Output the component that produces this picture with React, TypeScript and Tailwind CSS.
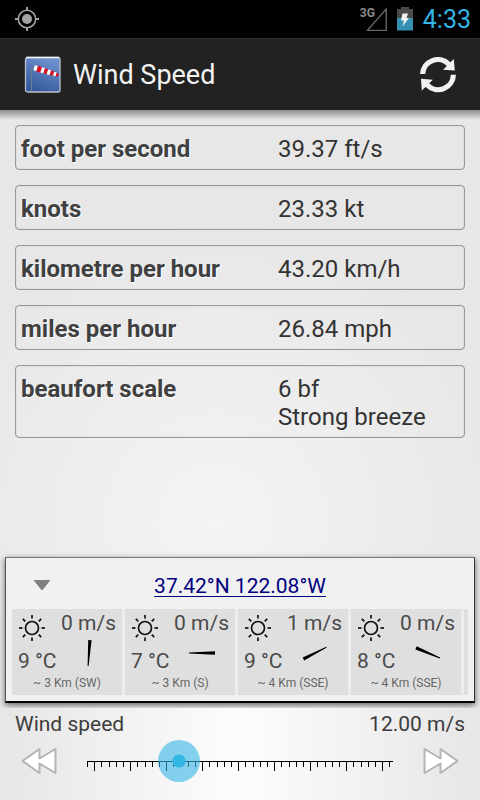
import { useState } from 'react';

const readings = [
  { label: 'foot per second', values: ['39.37 ft/s'] },
  { label: 'knots', values: ['23.33 kt'] },
  { label: 'kilometre per hour', values: ['43.20 km/h'] },
  { label: 'miles per hour', values: ['26.84 mph'] },
  { label: 'beaufort scale', values: ['6 bf', 'Strong breeze'] },
];

const stations = [
  { wind: '0 m/s', temp: '9 °C', distance: '~ 3 Km (SW)', angle: -86 },
  { wind: '0 m/s', temp: '7 °C', distance: '~ 3 Km (S)', angle: 0 },
  { wind: '1 m/s', temp: '9 °C', distance: '~ 4 Km (SSE)', angle: 153 },
  { wind: '0 m/s', temp: '8 °C', distance: '~ 4 Km (SSE)', angle: 203 },
];

const ticks = Array.from({ length: 43 }, (_, i) => ({ x: Math.round(i * 7.2), major: i % 5 === 1 }));
const rays = [0, 45, 90, 135, 180, 225, 270, 315];

function StatusBar() {
  return (
    <div className="flex h-[38px] items-center justify-between bg-black pr-[9px] pl-[15px]">
      <svg className="size-6" viewBox="0 0 24 24" fill="none" stroke="#a3a3a3">
        <circle cx="12" cy="12" r="8.7" strokeWidth="1.6" />
        <circle cx="12" cy="12" r="5" fill="#a3a3a3" stroke="none" />
        <path d="M12 0v4M12 20v4M0 12h4M20 12h4" strokeWidth="2" />
      </svg>
      <div className="flex items-center">
        <div className="relative h-6 w-7">
          <svg className="size-full" viewBox="0 0 28 24" fill="none" stroke="#6b6666" strokeWidth="1.3">
            <path d="M7.5 23.3 26.3 2v21.3z" />
          </svg>
          <span className="absolute top-0 left-0 text-xs leading-3 font-bold text-[#8a8a8a]">3G</span>
        </div>
        <svg className="ml-[9px] h-6 w-4" viewBox="0 0 16 24">
          <path d="M4 0h8v2h4v9H0V2h4z" fill="#4a4a4a" />
          <path d="M0 11h16v12.5H0z" fill="#3590b3" />
          <path d="M5.5 6.5H11L9.5 11H12L5.5 19.5 7 13.5H4z" fill="#f4f4f4" />
        </svg>
        <span className="ml-[10px] pt-0.5 text-[25px] leading-7 text-[#33b5e5]">4:33</span>
      </div>
    </div>
  );
}

function ActionBar() {
  return (
    <header className="flex h-[72px] items-center justify-between border-t border-[#303030] bg-[#222] px-6">
      <div className="flex items-center gap-3">
        <svg className="size-[37px]" viewBox="0 0 37 37">
          <defs>
            <linearGradient id="sky" x1="0" y1="1" x2="0.4" y2="0">
              <stop offset="0" stopColor="#2c5093" />
              <stop offset="1" stopColor="#6a8dcc" />
            </linearGradient>
          </defs>
          <rect x="1.5" y="1.5" width="34.5" height="34.5" rx="2" fill="url(#sky)" stroke="#b9c0cc" strokeWidth="1.3" />
          <path d="M2 1.5h33" stroke="#f0f2f5" strokeWidth="1.5" />
          <path d="M7.5 35V13l3-2" fill="none" stroke="#6f7a8c" />
          <g transform="rotate(17 12 12)">
            <rect x="10" y="9.5" width="3.5" height="5.5" rx="1.5" fill="#fff" />
            <path d="M13.5 9.3h4v6h-4zM20.5 9.6h3.5v5.2h-3.5zM27 10h3.5v4.5H27zM33 10.5h2.5v3.5H33z" fill="#e30f1c" />
            <path d="M17.5 9.5h3v5.5h-3zM24 9.8h3v5h-3zM30.5 10.3H33v4h-2.5z" fill="#fff" />
          </g>
        </svg>
        <h1 className="text-[27px] leading-8 text-[#f3f3f3]">Wind Speed</h1>
      </div>
      <button type="button" aria-label="Refresh">
        <svg className="size-9" viewBox="0 0 36 36" fill="#f1f1f1">
          <path d="M0 17A17.8 17.8 0 0 1 30.5 5.300L33.800 2 34.800 13.500 23 12.700 26.800 9A12.600 12.600 0 0 0 5.200 17z" />
          <path d="M36 17.800A17.800 17.800 0 0 1 5.500 30L1.800 33.500 1 21.800 12.800 22.700 9.200 26.300A12.600 12.600 0 0 0 30.800 17.800z" />
        </svg>
      </button>
    </header>
  );
}

function Sun() {
  return (
    <svg className="size-7" viewBox="0 0 28 28" fill="none" stroke="#111" strokeWidth="1.7">
      <circle cx="14" cy="14" r="6.5" />
      {rays.map((deg) => (
        <path key={deg} d="M14 1v3.5" transform={`rotate(${deg} 14 14)`} />
      ))}
    </svg>
  );
}

function Needle({ angle }: { angle: number }) {
  return (
    <svg className="size-7" viewBox="0 0 28 28">
      <path d="M1 13.5 27 12.300v3.400L1 14.500z" fill="#000" transform={`rotate(${angle} 14 14)`} />
    </svg>
  );
}

function Stations() {
  return (
    <section className="mx-[5px] border border-t-[#777] border-r-[#333] border-b-2 border-l-[#555] border-b-black bg-[#f1f1f1] px-1.5 pb-1.5 shadow-[0_2px_6px_rgba(0,0,0,0.6)]">
      <div className="grid h-[51px] grid-cols-[1fr_auto_1fr] items-center pt-1">
        <button type="button" aria-label="Collapse" className="w-fit pl-5">
          <svg className="h-3 w-5" viewBox="0 0 20 12">
            <path d="M1.5 0h17L11 9.500q-1 1-2 0z" fill="#808080" />
          </svg>
        </button>
        <a href="#map" className="text-[21px] leading-7 text-[#000080] underline decoration-1 underline-offset-3">
          37.42°N 122.08°W
        </a>
      </div>
      <ul className="flex gap-[3px] overflow-hidden bg-[#ededed]">
        {stations.map((s, i) => (
          <li key={i} className="h-[86px] w-[110px] shrink-0 bg-[#dfdfdf] px-1.5 text-[21px] leading-7 text-[#4a4a4a]">
            <div className="flex h-[38px] items-center justify-between">
              <Sun />
              <span className="pb-2.5">{s.wind}</span>
            </div>
            <div className="flex h-7 items-center justify-between pr-[13px]">
              <span>{s.temp}</span>
              <div className="pb-4">
                <Needle angle={s.angle} />
              </div>
            </div>
            <div className="text-center text-xs leading-4 text-[#666]">{s.distance}</div>
          </li>
        ))}
        <li className="h-[86px] w-[110px] shrink-0 bg-[#dfdfdf]" />
      </ul>
    </section>
  );
}

function SkipIcon({ flip = false }: { flip?: boolean }) {
  return (
    <svg className={flip ? 'h-7 w-9 -scale-x-100' : 'h-7 w-9'} viewBox="0 0 36 28" fill="#fff" stroke="#b4b4b4" strokeWidth="2" strokeLinejoin="round">
      <path d="M1.500 14 18.500 2v9.500L34.500 2v24l-16-9.500V26z" />
    </svg>
  );
}

function SpeedControl() {
  const [speed, setSpeed] = useState(12);

  return (
    <footer className="mt-[5px] h-[92px] bg-linear-to-r from-[#e6e6e6] via-[#fdfdfd] to-[#e6e6e6] px-[15px] pt-0.5">
      <div className="flex justify-between text-[21px] leading-7 text-[#3c3c3c]">
        <label htmlFor="speed">Wind speed</label>
        <output htmlFor="speed">{speed.toFixed(2)} m/s</output>
      </div>
      <div className="flex items-center px-1.5 pt-0.5">
        <button type="button" aria-label="Slower" onClick={() => setSpeed(Math.max(0, speed - 1))}>
          <SkipIcon />
        </button>
        <div className="relative mx-[9px] h-[42px] flex-1">
          <svg className="absolute inset-x-[21px] top-[21px] h-[10px] w-[calc(100%-42px)]" viewBox="0 0 306 10" preserveAspectRatio="none" shapeRendering="crispEdges">
            <path d="M0 0h306v1H0z" />
            {ticks.map((t) => (
              <rect key={t.x} x={t.x} y="0" width="1" height={t.major ? 10 : 6} />
            ))}
          </svg>
          <input
            id="speed"
            type="range"
            min="0"
            max="40"
            value={speed}
            onChange={(e) => setSpeed(Number(e.target.value))}
            className="absolute inset-0 size-full appearance-none bg-transparent [&::-webkit-slider-thumb]:size-[42px] [&::-webkit-slider-thumb]:appearance-none [&::-webkit-slider-thumb]:rounded-full [&::-webkit-slider-thumb]:bg-[radial-gradient(circle,#33b5e5_6px,rgba(51,181,229,0.6)_7px)]"
          />
        </div>
        <button type="button" aria-label="Faster" onClick={() => setSpeed(Math.min(40, speed + 1))}>
          <SkipIcon flip />
        </button>
      </div>
    </footer>
  );
}

export default function App() {
  return (
    <div className="flex min-h-screen flex-col bg-[#e7e7e7] font-[Roboto,sans-serif]">
      <StatusBar />
      <ActionBar />
      <div className="flex flex-1 flex-col bg-[radial-gradient(circle_at_45%_60%,#f4f4f4,#e7e7e7_300px)]">
        <div className="h-[10px] bg-linear-to-b from-[#8c8c8c] to-transparent" />
        <dl className="flex flex-1 flex-col gap-[15px] px-[15px] pt-[5px] pb-4 text-2xl leading-7 text-[#333]">
          {readings.map((r) => (
            <div key={r.label} className="grid grid-cols-[257fr_181fr] rounded-sm border border-[#999] px-[5px] pt-[9px] pb-1.5 shadow-[inset_0_0_1px_#999]">
              <dt className="font-bold text-[#404040] [text-shadow:1px_1px_1px_#fff]">{r.label}</dt>
              <dd>
                {r.values.map((v) => (
                  <div key={v}>{v}</div>
                ))}
              </dd>
            </div>
          ))}
        </dl>
        <Stations />
        <SpeedControl />
      </div>
    </div>
  );
}
